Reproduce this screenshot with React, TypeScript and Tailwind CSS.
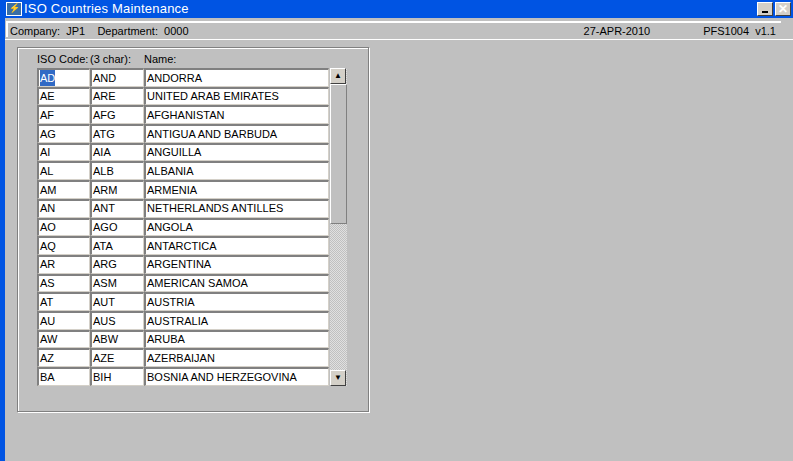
import React from 'react';

const rows: [string, string, string][] = [
  ['AD', 'AND', 'ANDORRA'],
  ['AE', 'ARE', 'UNITED ARAB EMIRATES'],
  ['AF', 'AFG', 'AFGHANISTAN'],
  ['AG', 'ATG', 'ANTIGUA AND BARBUDA'],
  ['AI', 'AIA', 'ANGUILLA'],
  ['AL', 'ALB', 'ALBANIA'],
  ['AM', 'ARM', 'ARMENIA'],
  ['AN', 'ANT', 'NETHERLANDS ANTILLES'],
  ['AO', 'AGO', 'ANGOLA'],
  ['AQ', 'ATA', 'ANTARCTICA'],
  ['AR', 'ARG', 'ARGENTINA'],
  ['AS', 'ASM', 'AMERICAN SAMOA'],
  ['AT', 'AUT', 'AUSTRIA'],
  ['AU', 'AUS', 'AUSTRALIA'],
  ['AW', 'ABW', 'ARUBA'],
  ['AZ', 'AZE', 'AZERBAIJAN'],
  ['BA', 'BIH', 'BOSNIA AND HERZEGOVINA'],
];

const cell =
  'h-full bg-white border-t-2 border-l-2 border-t-[#808080] border-l-[#808080] border-b border-r border-b-[#d4d0c8] border-r-[#d4d0c8] px-[1px] flex items-center overflow-hidden whitespace-nowrap';

const Btn = ({ children }: { children: React.ReactNode }) => (
  <div className="w-4 h-4 bg-[#d4d0c8] border border-t-white border-l-white border-b-[#404040] border-r-[#404040] flex items-center justify-center text-[8px] leading-none">
    {children}
  </div>
);

export default function App() {
  return (
    <div className="w-[793px] h-[461px] bg-[#0054e3] flex flex-col overflow-hidden text-black" style={{ fontFamily: '"Liberation Sans", Arial, sans-serif' }}>
      {/* title bar */}
      <div className="h-[18px] flex items-center pl-[6px] pr-[2px] text-white text-[13px]">
        <div className="w-[16px] h-[14px] bg-[#3a6ea5] border border-white mr-[2px] flex items-center justify-center text-[9px] text-yellow-300">⚡</div>
        <span className="tracking-[0.2px]">ISO Countries Maintenance</span>
        <div className="ml-auto flex gap-[2px]">
          <div className="w-[16px] h-[14px] bg-[#d4d0c8] border border-t-white border-l-white border-b-[#404040] border-r-[#404040] flex items-end justify-center pb-[2px]">
            <div className="w-[6px] h-[2px] bg-black" />
          </div>
          <div className="w-[16px] h-[14px] bg-[#d4d0c8] border border-t-white border-l-white border-b-[#404040] border-r-[#404040] flex items-center justify-center text-[12px] font-bold leading-none">
            ✕
          </div>
        </div>
      </div>
      {/* body */}
      <div className="flex-1 ml-[5px] bg-[#c0c0c0] flex flex-col">
        <div className="mt-[3px] mx-[1px] mr-[12px] h-[16px] border-t-2 border-l-2 border-white bg-[#c0c0c0] flex items-center text-[11px] pl-[2px] pt-[2px]">
          <span>Company:&nbsp; JP1&nbsp;&nbsp;&nbsp; Department:&nbsp; 0000</span>
          <span className="ml-auto mr-[53px]">27-APR-2010</span>
          <span className="mr-[5px]">PFS1004&nbsp; v1.1</span>
        </div>
        <div className="h-px bg-white mt-[2px]" />
        {/* panel */}
        <div className="ml-[12px] mt-[7px] w-[352px] h-[365px] border border-[#808080] shadow-[inset_1px_1px_0_white,1px_1px_0_white] pl-[19px] pt-[5px]">
          <div className="flex text-[11px] h-[15px] items-end pb-[1px]">
            <span className="w-[53px]">ISO Code:</span>
            <span className="w-[54px]">(3 char):</span>
            <span>Name:</span>
          </div>
          <div className="flex">
            <div className="w-[292px] flex flex-col text-[11px]">
              {rows.map((r, i) => (
                <div key={r[0]} className="flex h-[18.7px]">
                  <div className={`${cell} w-[53px]`}>
                    {i === 0 ? <span className="bg-[#316ac5] text-white">{r[0]}</span> : r[0]}
                  </div>
                  <div className={`${cell} w-[54px]`}>{r[1]}</div>
                  <div className={`${cell} flex-1`}>{r[2]}</div>
                </div>
              ))}
            </div>
            <div className="w-[17px] ml-px flex flex-col h-[318px] bg-[repeating-conic-gradient(#e0e0e0_0_25%,#c0c0c0_0_50%)] bg-[length:2px_2px]">
              <Btn>▲</Btn>
              <div className="h-[140px] bg-[#c0c0c0] border border-t-white border-l-white border-b-[#808080] border-r-[#808080]" />
              <div className="flex-1" />
              <Btn>▼</Btn>
            </div>
          </div>
        </div>
      </div>
    </div>
  );
}
